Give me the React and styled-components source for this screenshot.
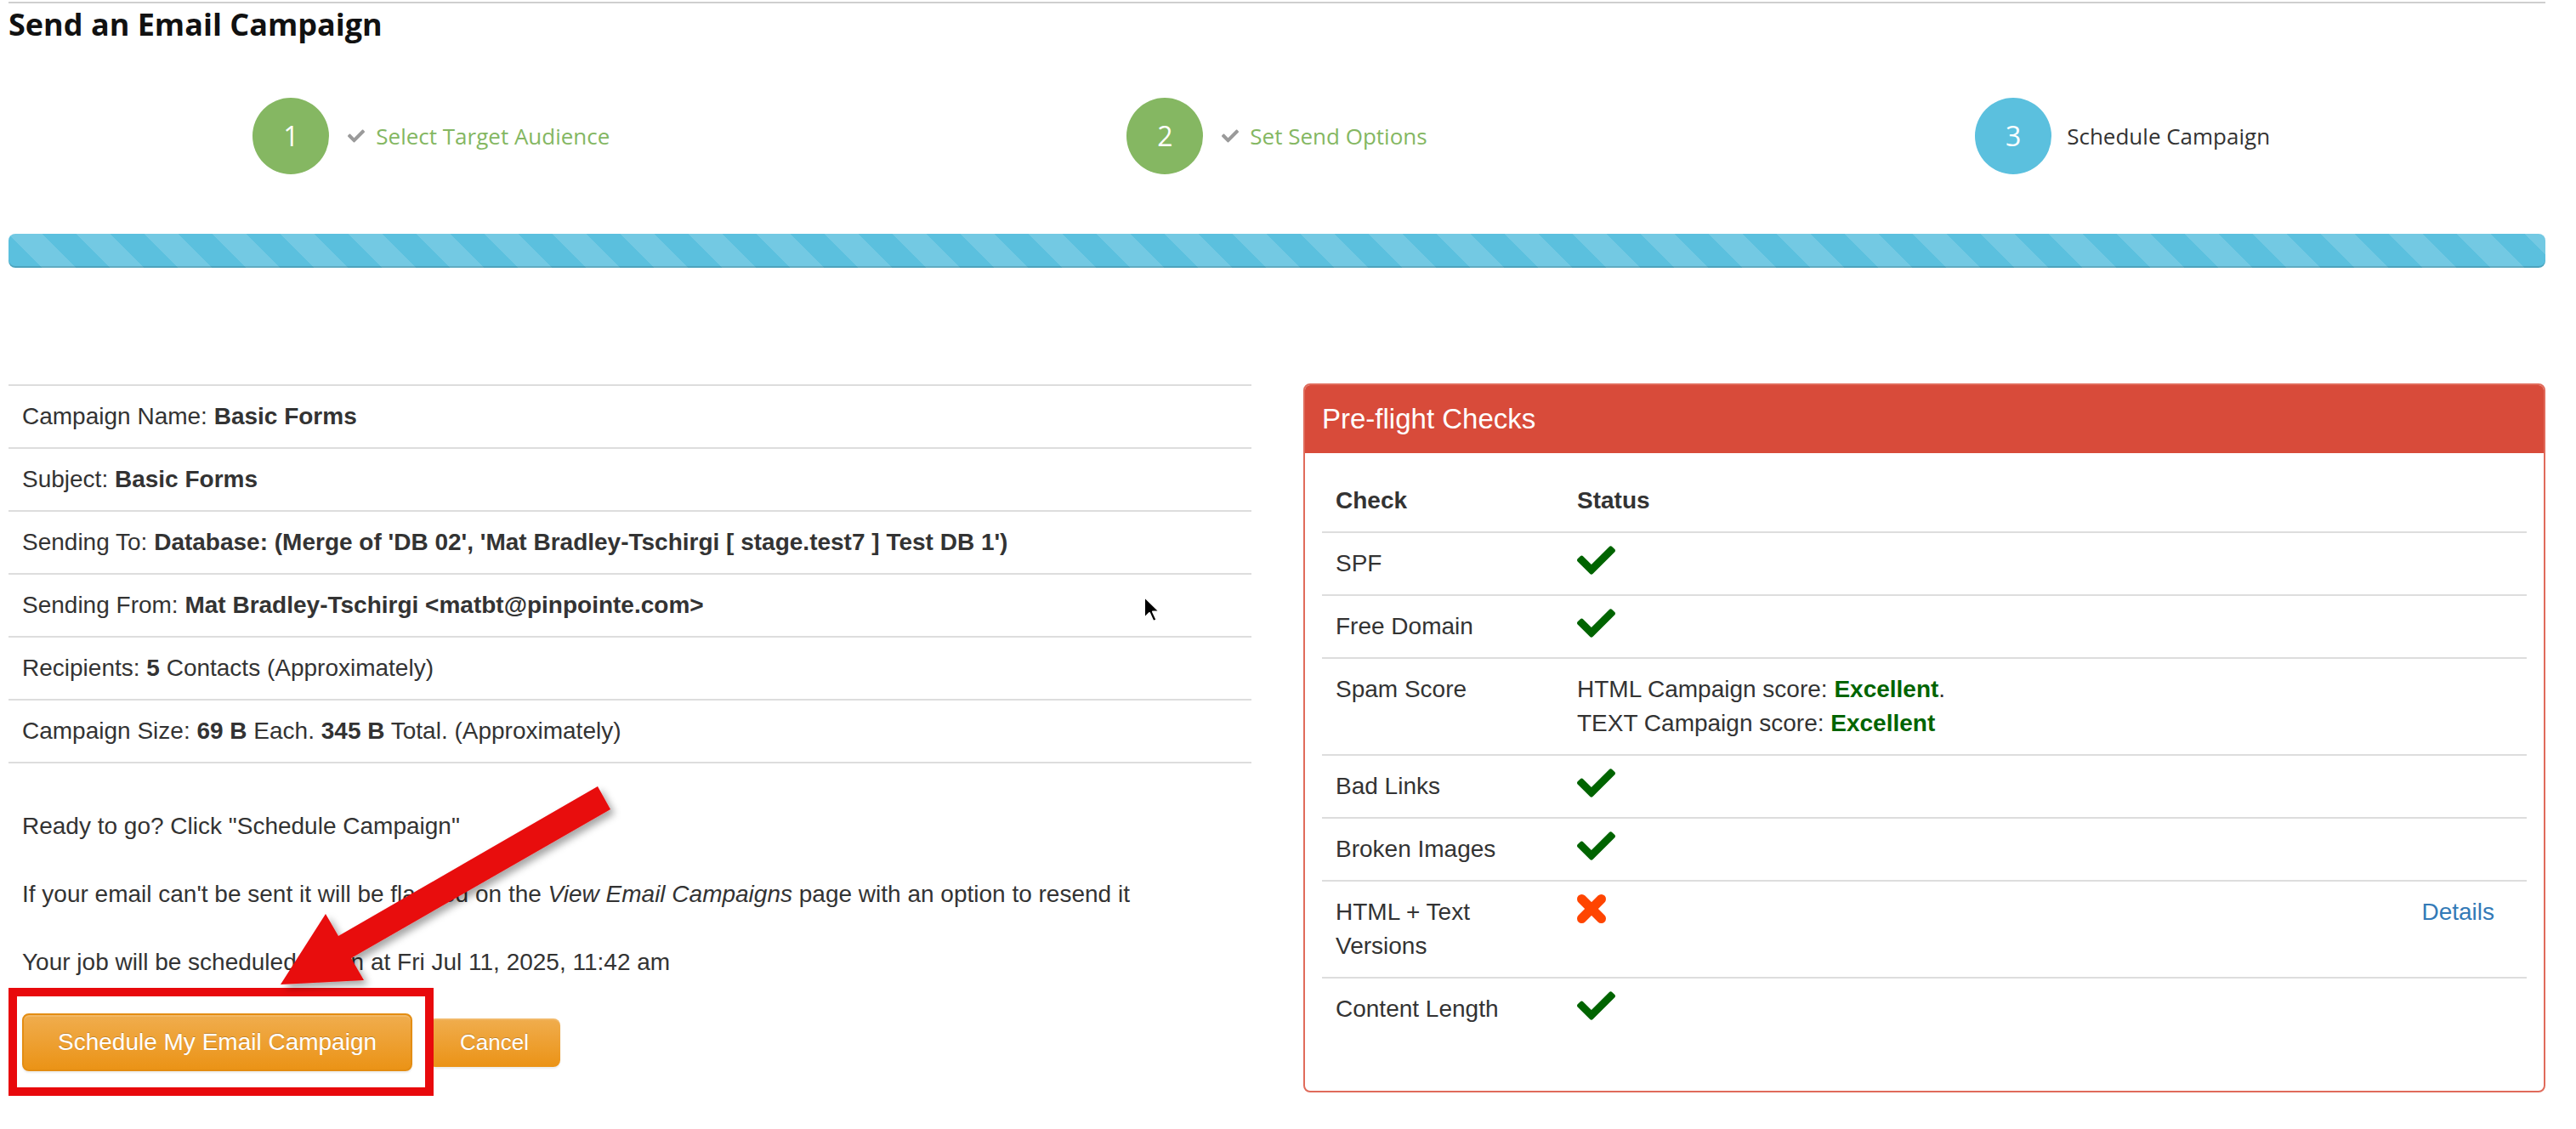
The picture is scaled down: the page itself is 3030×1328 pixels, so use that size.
import React from "react";
import styled, { createGlobalStyle } from "styled-components";

const GlobalStyle = createGlobalStyle`
  html, body {
    margin: 0;
    padding: 0;
    background: #fff;
  }
  body {
    font-family: "Liberation Sans", Arial, sans-serif;
    font-size: 28px;
    line-height: 40px;
    color: #333;
  }
`;

const Page = styled.div`
  position: relative;
  width: 3030px;
  height: 1328px;
  box-sizing: border-box;
  padding: 2px 36px 0 10px;
  overflow: hidden;
`;

const Container = styled.div`
  border-top: 2px solid #cfcfcf;
`;

const Title = styled.h1`
  margin: 5px 0 0;
  font-family: "Open Sans", sans-serif;
  font-weight: 700;
  font-size: 36px;
  line-height: 40px;
  color: #111;
`;

const Steps = styled.div`
  display: grid;
  grid-template-columns: repeat(3, 1fr);
  margin-top: 66px;
`;

const Step = styled.div`
  display: flex;
  align-items: center;
  justify-content: center;
`;

const Circle = styled.div`
  width: 90px;
  height: 90px;
  border-radius: 50%;
  background: ${(p) => (p.$active ? "#5bc0de" : "#85b762")};
  color: #fff;
  font-family: "Open Sans", sans-serif;
  font-size: 32px;
  display: flex;
  align-items: center;
  justify-content: center;
`;

const StepCheck = styled.span`
  display: flex;
  margin-left: 22px;
  color: #9a9a9a;
`;

const StepLabel = styled.span`
  margin-left: ${(p) => (p.$active ? "18px" : "13px")};
  font-family: "Open Sans", sans-serif;
  font-size: 26px;
  color: ${(p) => (p.$active ? "#333" : "#84b762")};
`;

const Progress = styled.div`
  margin-top: 70px;
  height: 40px;
  border-radius: 8px;
  background-color: #5bc0de;
  background-image: linear-gradient(
    45deg,
    rgba(255, 255, 255, 0.15) 25%,
    transparent 25%,
    transparent 50%,
    rgba(255, 255, 255, 0.15) 50%,
    rgba(255, 255, 255, 0.15) 75%,
    transparent 75%,
    transparent
  );
  background-size: 80px 80px;
  box-shadow: inset 0 -2px 0 rgba(0, 0, 0, 0.15);
`;

const Columns = styled.div`
  display: grid;
  grid-template-columns: 1462px 1fr;
  column-gap: 61px;
  margin-top: 136px;
  align-items: start;
`;

const LeftCol = styled.div`
  padding-top: 1px;
`;

const InfoTable = styled.table`
  width: 100%;
  border-collapse: collapse;
  margin-bottom: 54px;

  td {
    padding: 16px;
    border-top: 2px solid #ddd;
  }
  tr:last-child td {
    border-bottom: 2px solid #ddd;
  }
`;

const Notes = styled.div`
  padding: 0 16px;
`;

const Note = styled.p`
  margin: 0 0 40px;
`;

const ButtonRow = styled.div`
  display: flex;
  align-items: center;
  gap: 19px;
`;

const WarnButton = styled.button`
  font-family: "Liberation Sans", Arial, sans-serif;
  font-size: ${(p) => (p.$small ? "26px" : "28px")};
  line-height: ${(p) => (p.$small ? "37px" : "40px")};
  padding: ${(p) => (p.$small ? "10px 37px" : "12px 40px")};
  color: #fff;
  border: ${(p) => (p.$small ? "0" : "2px solid #e38d13")};
  border-radius: 8px;
  background: linear-gradient(to bottom, #f0ad4e 0, #eb9316 100%);
  text-shadow: 0 -1px 0 rgba(0, 0, 0, 0.2);
  box-shadow: inset 0 2px 0 rgba(255, 255, 255, 0.15), 0 2px 2px rgba(0, 0, 0, 0.075);
  cursor: pointer;
`;

const Panel = styled.div`
  border: 2px solid #e06b5b;
  border-radius: 8px;
  overflow: hidden;
`;

const PanelHeading = styled.div`
  height: 80px;
  padding: 0 20px;
  display: flex;
  align-items: center;
  background: #d84b3a;
  color: #fff;
  font-size: 33px;
`;

const PanelBody = styled.div`
  padding: 20px;
`;

const ChecksTable = styled.table`
  width: 100%;
  border-collapse: collapse;
  margin-bottom: 40px;

  th {
    text-align: left;
    font-weight: 700;
    padding: 16px;
    border-bottom: 2px solid #ddd;
  }
  th:first-child {
    width: 252px;
  }
  td {
    padding: 16px;
    border-top: 2px solid #ddd;
    vertical-align: top;
  }
`;

const DetailsCell = styled.td`
  text-align: right;
  && {
    padding-right: 38px;
  }
`;

const DetailsLink = styled.a`
  color: #337ab7;
  text-decoration: none;
`;

const Good = styled.b`
  color: #006400;
`;

const IconBox = styled.div`
  height: 40px;
  display: flex;
  align-items: flex-start;
  margin-top: -1px;
`;

const Annotation = styled.div`
  position: absolute;
  left: 10px;
  top: 1162px;
  width: 500px;
  height: 127px;
  box-sizing: border-box;
  border: 10px solid #e8090c;
  pointer-events: none;
`;

const Overlay = styled.svg`
  position: absolute;
  left: 0;
  top: 0;
  pointer-events: none;
`;

const Cursor = styled.svg`
  position: absolute;
  left: 1344px;
  top: 700px;
  pointer-events: none;
`;

const CheckGlyph = ({ width, height, color }) => (
  <svg width={width} height={height} viewBox="0 64 512 384" fill={color}>
    <path d="M173.898 439.404l-166.4-166.4c-9.997-9.997-9.997-26.206 0-36.204l36.203-36.204c9.997-9.998 26.207-9.998 36.204 0L192 312.69 432.095 72.596c9.997-9.997 26.207-9.997 36.204 0l36.203 36.204c9.997 9.997 9.997 26.206 0 36.204l-294.4 294.401c-9.998 9.997-26.207 9.997-36.204-.001z" />
  </svg>
);

const Pass = () => (
  <IconBox>
    <CheckGlyph width={45} height={34} color="#006400" />
  </IconBox>
);

const Fail = () => (
  <IconBox>
    <svg width="34" height="34" viewBox="0 0 34 34">
      <g stroke="#ff4500" strokeWidth="11" strokeLinecap="round">
        <line x1="5.5" y1="5.5" x2="28.5" y2="28.5" />
        <line x1="28.5" y1="5.5" x2="5.5" y2="28.5" />
      </g>
    </svg>
  </IconBox>
);

const steps = [
  { n: 1, label: "Select Target Audience", done: true },
  { n: 2, label: "Set Send Options", done: true },
  { n: 3, label: "Schedule Campaign", done: false },
];

const checks = [
  { name: "SPF", status: <Pass /> },
  { name: "Free Domain", status: <Pass /> },
  {
    name: "Spam Score",
    status: (
      <>
        <div>
          HTML Campaign score: <Good>Excellent</Good>.
        </div>
        <div>
          TEXT Campaign score: <Good>Excellent</Good>
        </div>
      </>
    ),
  },
  { name: "Bad Links", status: <Pass /> },
  { name: "Broken Images", status: <Pass /> },
  { name: "HTML + Text Versions", status: <Fail />, details: true },
  { name: "Content Length", status: <Pass /> },
];

export default function App() {
  return (
    <Page>
      <GlobalStyle />
      <Container>
        <Title>Send an Email Campaign</Title>

        <Steps>
          {steps.map((s) => (
            <Step key={s.n}>
              <Circle $active={!s.done}>{s.n}</Circle>
              {s.done && (
                <StepCheck>
                  <CheckGlyph width={20} height={16} color="#9a9a9a" />
                </StepCheck>
              )}
              <StepLabel $active={!s.done}>{s.label}</StepLabel>
            </Step>
          ))}
        </Steps>

        <Progress />

        <Columns>
          <LeftCol>
            <InfoTable>
              <tbody>
                <tr>
                  <td>
                    Campaign Name: <b>Basic Forms</b>
                  </td>
                </tr>
                <tr>
                  <td>
                    Subject: <b>Basic Forms</b>
                  </td>
                </tr>
                <tr>
                  <td>
                    Sending To:{" "}
                    <b>
                      Database: (Merge of 'DB 02', 'Mat Bradley-Tschirgi [ stage.test7 ] Test DB 1')
                    </b>
                  </td>
                </tr>
                <tr>
                  <td>
                    Sending From: <b>Mat Bradley-Tschirgi &lt;matbt@pinpointe.com&gt;</b>
                  </td>
                </tr>
                <tr>
                  <td>
                    Recipients: <b>5</b> Contacts (Approximately)
                  </td>
                </tr>
                <tr>
                  <td>
                    Campaign Size: <b>69 B</b> Each. <b>345 B</b> Total. (Approximately)
                  </td>
                </tr>
              </tbody>
            </InfoTable>

            <Notes>
              <Note>Ready to go? Click "Schedule Campaign"</Note>
              <Note>
                If your email can't be sent it will be flagged on the <i>View Email Campaigns</i> page
                with an option to resend it
              </Note>
              <Note>Your job will be scheduled to run at Fri Jul 11, 2025, 11:42 am</Note>
              <ButtonRow>
                <WarnButton type="submit">Schedule My Email Campaign</WarnButton>
                <WarnButton $small type="button">
                  Cancel
                </WarnButton>
              </ButtonRow>
            </Notes>
          </LeftCol>

          <Panel>
            <PanelHeading>Pre-flight Checks</PanelHeading>
            <PanelBody>
              <ChecksTable>
                <thead>
                  <tr>
                    <th>Check</th>
                    <th>Status</th>
                    <th />
                  </tr>
                </thead>
                <tbody>
                  {checks.map((c) => (
                    <tr key={c.name}>
                      <td>{c.name}</td>
                      <td>{c.status}</td>
                      <DetailsCell>
                        {c.details && <DetailsLink href="#">Details</DetailsLink>}
                      </DetailsCell>
                    </tr>
                  ))}
                </tbody>
              </ChecksTable>
            </PanelBody>
          </Panel>
        </Columns>
      </Container>

      <Annotation />
      <Overlay width="3030" height="1328" viewBox="0 0 3030 1328">
        <defs>
          <filter id="arrowShadow" x="-20%" y="-20%" width="140%" height="140%">
            <feDropShadow dx="5" dy="5" stdDeviation="4" floodColor="#000" floodOpacity="0.35" />
          </filter>
        </defs>
        <polygon
          points="703,925 718,952 413,1127 428,1153 330,1158 383,1075 398,1101"
          fill="#e8090c"
          filter="url(#arrowShadow)"
        />
      </Overlay>
      <Cursor width="22" height="34" viewBox="0 0 22 34">
        <path
          d="M2 2 L2 27 L8 21 L12.5 31 L16.5 29.2 L12 19.5 L20 19.5 Z"
          fill="#000"
          stroke="#fff"
          strokeWidth="2"
          strokeLinejoin="round"
        />
      </Cursor>
    </Page>
  );
}
